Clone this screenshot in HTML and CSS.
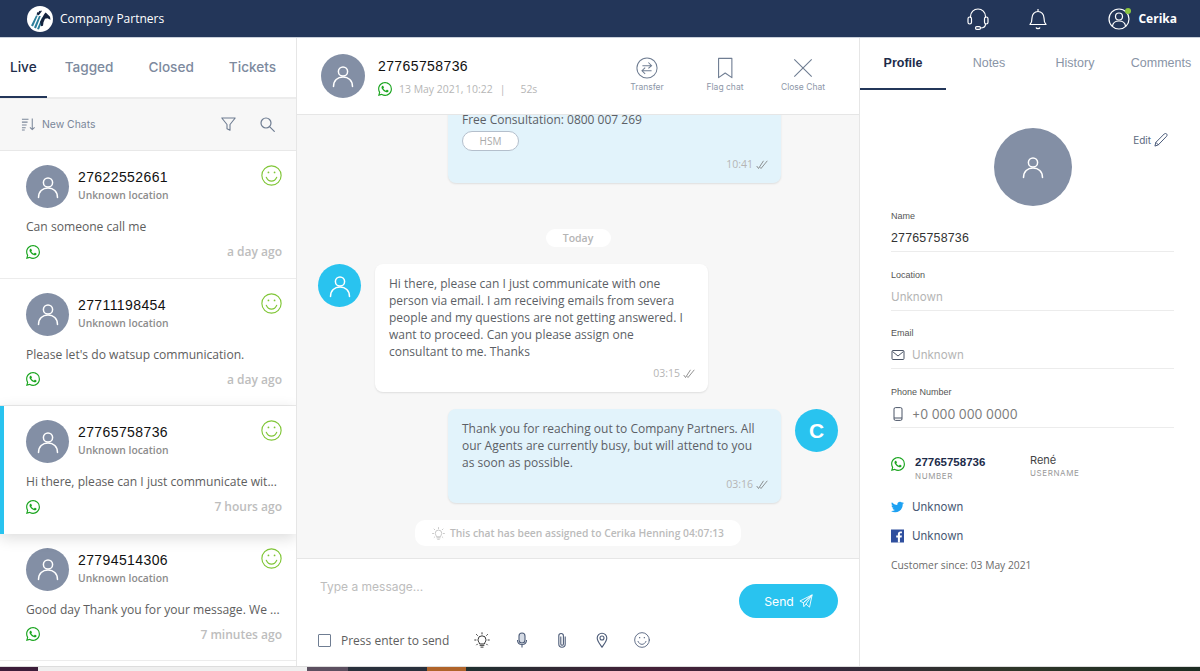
FILE: index.html
```html
<!DOCTYPE html>
<html lang="en">
<head>
	<meta charset="utf-8">
	<title>Company Partners</title>
	<link rel="stylesheet" href="styles.css">
</head>
<body>

<svg class="defs" width="0" height="0">
	<defs>
		<symbol id="i-user" viewBox="0 0 24 24">
			<circle cx="12" cy="7.5" r="4.6" fill="none" stroke="currentColor" stroke-width="1.5"/>
			<path d="M2.5 22.5c0-6 4-9.500 9.500-9.500s9.500 3.500 9.500 9.500" fill="none" stroke="currentColor" stroke-width="1.500" stroke-linecap="round"/>
		</symbol>
		<symbol id="i-wa" viewBox="0 0 24 24">
			<path fill="currentColor" d="M17.472 14.382c-.297-.149-1.758-.867-2.03-.967-.273-.099-.471-.148-.67.15-.197.297-.767.966-.94 1.164-.173.199-.347.223-.644.075-.297-.15-1.255-.463-2.39-1.475-.883-.788-1.48-1.761-1.653-2.059-.173-.297-.018-.458.13-.606.134-.133.298-.347.446-.52.149-.174.198-.298.298-.497.099-.198.05-.371-.025-.52-.075-.149-.669-1.612-.916-2.207-.242-.579-.487-.5-.669-.51-.173-.008-.371-.01-.57-.01-.198 0-.52.074-.792.372-.272.297-1.04 1.016-1.04 2.479 0 1.462 1.065 2.875 1.213 3.074.149.198 2.096 3.2 5.077 4.487.709.306 1.262.489 1.694.625.712.227 1.36.195 1.871.118.571-.085 1.758-.719 2.006-1.413.248-.694.248-1.289.173-1.413-.074-.124-.272-.198-.57-.347m-5.421 7.403h-.004a9.87 9.87 0 01-5.031-1.378l-.361-.214-3.741.982.998-3.648-.235-.374a9.86 9.86 0 01-1.51-5.26c.001-5.45 4.436-9.884 9.888-9.884 2.64 0 5.122 1.03 6.988 2.898a9.825 9.825 0 012.893 6.994c-.003 5.45-4.437 9.884-9.885 9.884m8.413-18.297A11.815 11.815 0 0012.05 0C5.495 0 .16 5.335.157 11.892c0 2.096.547 4.142 1.588 5.945L.057 24l6.305-1.654a11.882 11.882 0 005.683 1.448h.005c6.554 0 11.89-5.335 11.893-11.893a11.821 11.821 0 00-3.48-8.413z"/>
		</symbol>
		<symbol id="i-smile" viewBox="0 0 24 24">
			<g fill="none" stroke="currentColor" stroke-width="1.300" stroke-linecap="round">
				<circle cx="12" cy="12" r="11"/>
				<path d="M6 14c1.300 3 3.500 4.500 6 4.500s4.700-1.500 6-4.500"/>
			</g>
			<circle cx="8.500" cy="8.500" r="1" fill="currentColor"/>
			<circle cx="15.500" cy="8.500" r="1" fill="currentColor"/>
		</symbol>
		<symbol id="i-ticks" viewBox="0 0 12 10">
			<path d="M.7 6l1.800 2.500L7.500.8M4 7.300l1 1.200L11.300.8" fill="none" stroke="currentColor" stroke-width=".8"/>
		</symbol>
		<symbol id="i-bulb" viewBox="0 0 18 18">
			<g fill="none" stroke="currentColor" stroke-width="1.100" stroke-linecap="round">
				<path d="M6.300 13c-.3-1.400-1.800-2.200-1.800-4.200a4.500 4.500 0 019 0c0 2-1.500 2.800-1.800 4.200z"/>
				<path d="M6.800 15h4.400M7.800 17h2.400M9 .8v1.400M2.800 2.800l1 1M15.200 2.800l-1 1M.8 9h1.400M15.800 9h1.400M3 14.500l.9-.9M15 14.500l-.9-.9"/>
			</g>
		</symbol>
	</defs>
</svg>

<header class="topbar">
	<div class="brand">
		<svg class="brand-logo" viewBox="0 0 26 26">
			<circle cx="13" cy="13" r="13" fill="#fff"/>
			<path d="M4 19.500L9 9.500h1.800L6 20.500zM7 21.500L12 10h1.800L9 22.500zM10 23L15 11.500h1.800L12 23.500z" fill="#2c7f9b"/>
			<path d="M13 16l4-7.500 1.500-2 1 .8 3.500 3.500 .5 3-3-1.500-2.500.5-1.500 3.500-.5 3.500-2 .5z" fill="#14233f"/>
			<path d="M9.500 8.500l1-2.500 1 .5 .8-1.800 1 .6 .8-1 .7 1-3 4z" fill="#14233f"/>
		</svg>
		<span class="brand-name">Company Partners</span>
	</div>
	<div class="top-icons">
		<svg class="top-headset" viewBox="0 0 22 22" fill="none" stroke="#fff" stroke-width="1.200">
			<path d="M3.500 10V8.500a7.500 7.500 0 0115 0V10"/>
			<rect x="1" y="9" width="3.500" height="7" rx="1.700"/>
			<rect x="17.500" y="9" width="3.500" height="7" rx="1.700"/>
			<path d="M18.500 16c0 2.500-2 4-5 4"/>
			<rect x="8.500" y="18.700" width="5" height="2.600" rx="1.300"/>
		</svg>
		<svg class="top-bell" viewBox="0 0 18 22" fill="none" stroke="#fff" stroke-width="1.200" stroke-linejoin="round">
			<path d="M1 16.500c1.500-1.500 2-3 2-6.500 0-3.500 2.500-6.500 6-6.500s6 3 6 6.500c0 3.500.5 5 2 6.500z"/>
			<path d="M9 1v2.500"/>
			<path d="M7 19.500c.5 1.500 3.500 1.500 4 0"/>
		</svg>
		<div class="top-user">
			<svg class="top-user-icon" viewBox="0 0 22 22" fill="none" stroke="#fff" stroke-width="1.200">
				<circle cx="11" cy="11" r="10"/>
				<circle cx="11" cy="8.500" r="3.500"/>
				<path d="M4.500 18c.5-3.500 3-5 6.500-5s6 1.500 6.500 5"/>
			</svg>
			<span class="online-dot"></span>
		</div>
		<span class="top-name">Cerika</span>
	</div>
</header>

<main class="app">
	<aside class="chats">
		<nav class="chat-tabs">
			<a class="chat-tab chat-tab-on">Live</a>
			<a class="chat-tab">Tagged</a>
			<a class="chat-tab">Closed</a>
			<a class="chat-tab">Tickets</a>
		</nav>
		<div class="chat-tools">
			<svg class="tool-sort" viewBox="0 0 16 14" fill="none" stroke="#7a8699" stroke-width="1.100">
				<path d="M1 2h7M1 5h6M1 8h5M1 11h4M1 13.500h3"/>
				<path d="M12 1v12M9.500 10.500L12 13l2.500-2.500"/>
			</svg>
			<span class="tool-label">New Chats</span>
			<svg class="tool-filter" viewBox="0 0 15 15" fill="none" stroke="#6f7d92" stroke-width="1.100" stroke-linejoin="round">
				<path d="M.8 1h13.400L9 7.500v5.800l-3-1.500V7.500z"/>
			</svg>
			<svg class="tool-search" viewBox="0 0 15 15" fill="none" stroke="#6f7d92" stroke-width="1.200" stroke-linecap="round">
				<circle cx="6" cy="6" r="5"/>
				<path d="M9.800 9.800L14.300 14.300"/>
			</svg>
		</div>

		<div class="chat-item">
			<div class="chat-top">
				<div class="avatar avatar-grey"><svg class="avatar-user"><use href="#i-user"/></svg></div>
				<div class="chat-who">
					<div class="phone">27622552661</div>
					<div class="place">Unknown location</div>
				</div>
				<svg class="mood"><use href="#i-smile"/></svg>
			</div>
			<p class="chat-msg">Can someone call me</p>
			<div class="chat-foot">
				<svg class="wa"><use href="#i-wa"/></svg>
				<span class="chat-time">a day ago</span>
			</div>
		</div>

		<div class="chat-item">
			<div class="chat-top">
				<div class="avatar avatar-grey"><svg class="avatar-user"><use href="#i-user"/></svg></div>
				<div class="chat-who">
					<div class="phone">27711198454</div>
					<div class="place">Unknown location</div>
				</div>
				<svg class="mood"><use href="#i-smile"/></svg>
			</div>
			<p class="chat-msg">Please let's do watsup communication.</p>
			<div class="chat-foot">
				<svg class="wa"><use href="#i-wa"/></svg>
				<span class="chat-time">a day ago</span>
			</div>
		</div>

		<div class="chat-item chat-item-on">
			<div class="chat-top">
				<div class="avatar avatar-grey"><svg class="avatar-user"><use href="#i-user"/></svg></div>
				<div class="chat-who">
					<div class="phone">27765758736</div>
					<div class="place">Unknown location</div>
				</div>
				<svg class="mood"><use href="#i-smile"/></svg>
			</div>
			<p class="chat-msg">Hi there, please can I just communicate wit...</p>
			<div class="chat-foot">
				<svg class="wa"><use href="#i-wa"/></svg>
				<span class="chat-time">7 hours ago</span>
			</div>
		</div>

		<div class="chat-item">
			<div class="chat-top">
				<div class="avatar avatar-grey"><svg class="avatar-user"><use href="#i-user"/></svg></div>
				<div class="chat-who">
					<div class="phone">27794514306</div>
					<div class="place">Unknown location</div>
				</div>
				<svg class="mood"><use href="#i-smile"/></svg>
			</div>
			<p class="chat-msg">Good day Thank you for your message. We ...</p>
			<div class="chat-foot">
				<svg class="wa"><use href="#i-wa"/></svg>
				<span class="chat-time">7 minutes ago</span>
			</div>
		</div>
	</aside>

	<section class="convo">
		<div class="convo-head">
			<div class="avatar avatar-grey avatar-head"><svg class="avatar-user"><use href="#i-user"/></svg></div>
			<div class="convo-who">
				<div class="phone">27765758736</div>
				<div class="convo-meta">
					<svg class="wa"><use href="#i-wa"/></svg>
					<span>13 May 2021, 10:22</span>
					<span class="meta-bar">|</span>
					<span>52s</span>
				</div>
			</div>
			<div class="actions">
				<div class="action">
					<svg class="action-icon" viewBox="0 0 24 24" fill="none" stroke="#6f7d92" stroke-width="1.100">
						<circle cx="12" cy="12" r="11"/>
						<path d="M7 9.500h10M13.500 6l3.500 3.500-3.500 3M17 15H7M10 11.500L6.500 15l3.500 3.500"/>
					</svg>
					<span>Transfer</span>
				</div>
				<div class="action">
					<svg class="action-icon" viewBox="0 0 24 24" fill="none" stroke="#6f7d92" stroke-width="1.200" stroke-linejoin="round">
						<path d="M5 1.500h14.500v21L12.200 17.500 5 22.500z"/>
					</svg>
					<span>Flag chat</span>
				</div>
				<div class="action">
					<svg class="action-icon" viewBox="0 0 24 24" fill="none" stroke="#6f7d92" stroke-width="1.200">
						<path d="M2.500 2.500l19 19M21.500 2.500l-19 19"/>
					</svg>
					<span>Close Chat</span>
				</div>
			</div>
		</div>

		<div class="messages">
			<div class="msg-row msg-row-out">
				<div class="bubble bubble-out">
					<p>Free Consultation: 0800 007 269</p>
					<span class="hsm">HSM</span>
					<div class="stamp">10:41 <svg class="ticks"><use href="#i-ticks"/></svg></div>
				</div>
				<div class="avatar-gap"></div>
			</div>

			<div class="day"><span>Today</span></div>

			<div class="msg-row">
				<div class="avatar avatar-blue"><svg class="avatar-user"><use href="#i-user"/></svg></div>
				<div class="bubble">
					<p>Hi there, please can I just communicate with one<br>person via email. I am receiving emails from severa<br>people and my questions are not getting answered. I<br>want to proceed. Can you please assign one<br>consultant to me. Thanks</p>
					<div class="stamp">03:15 <svg class="ticks"><use href="#i-ticks"/></svg></div>
				</div>
			</div>

			<div class="msg-row msg-row-out">
				<div class="bubble bubble-out">
					<p>Thank you for reaching out to Company Partners. All<br>our Agents are currently busy, but will attend to you<br>as soon as possible.</p>
					<div class="stamp">03:16 <svg class="ticks"><use href="#i-ticks"/></svg></div>
				</div>
				<div class="avatar avatar-blue avatar-letter">C</div>
			</div>

			<div class="notice">
				<span><svg class="notice-bulb"><use href="#i-bulb"/></svg>This chat has been assigned to Cerika Henning 04:07:13</span>
			</div>
		</div>

		<div class="composer">
			<div class="composer-top">
				<span class="placeholder">Type a message...</span>
				<button class="send">Send
					<svg class="send-icon" viewBox="0 0 16 16" fill="none" stroke="#fff" stroke-width="1" stroke-linejoin="round">
						<path d="M15 1L1 8l4 2zM15 1L5 10l.5 4.500 2.500-3zM15 1l-3 14-4-3.500"/>
					</svg>
				</button>
			</div>
			<div class="composer-foot">
				<span class="check"></span>
				<span class="check-label">Press enter to send</span>
				<div class="composer-icons">
					<svg class="c-icon c-icon-dark"><use href="#i-bulb"/></svg>
					<svg class="c-icon" viewBox="0 0 16 16" fill="none" stroke="currentColor" stroke-width="1.100">
						<rect x="5" y="1" width="6" height="10" rx="3" fill="#d5dbe5"/>
						<path d="M3.500 8c0 3 2 4.500 4.500 4.500S12.500 11 12.500 8M8 12.500V15.500"/>
					</svg>
					<svg class="c-icon" viewBox="0 0 16 16" fill="none" stroke="currentColor" stroke-width="1.100">
						<path d="M6.800 4.500v7.500a1.300 1.300 0 002.600 0V3.800a2.300 2.300 0 00-4.600 0V12a3.200 3.200 0 006.400 0V4.500"/>
					</svg>
					<svg class="c-icon" viewBox="0 0 16 16" fill="none" stroke="currentColor" stroke-width="1.100">
						<path d="M8 15.200C5.500 11.500 3.200 9 3.200 6a4.800 4.800 0 019.600 0c0 3-2.300 5.500-4.800 9.200z"/>
						<circle cx="8" cy="6" r="2"/>
					</svg>
					<svg class="c-icon"><use href="#i-smile"/></svg>
				</div>
			</div>
		</div>
	</section>

	<aside class="profile">
		<nav class="profile-tabs">
			<a class="profile-tab profile-tab-on">Profile</a>
			<a class="profile-tab">Notes</a>
			<a class="profile-tab">History</a>
			<a class="profile-tab">Comments</a>
		</nav>
		<div class="profile-body">
			<div class="edit">Edit
				<svg class="edit-icon" viewBox="0 0 15 15" fill="none" stroke="#3d4f70" stroke-width="1">
					<path d="M1 14l1-4L11 1c1-.8 2-.6 2.500 0s.8 1.500 0 2.500L4.500 12.800z"/>
					<path d="M2 10l3 3"/>
				</svg>
			</div>
			<div class="profile-pic">
				<div class="avatar avatar-grey avatar-big"><svg class="avatar-user"><use href="#i-user"/></svg></div>
			</div>

			<div class="field">
				<label>Name</label>
				<div class="field-value field-dark">27765758736</div>
			</div>
			<div class="field">
				<label>Location</label>
				<div class="field-value">Unknown</div>
			</div>
			<div class="field">
				<label>Email</label>
				<div class="field-value">
					<svg class="field-icon" viewBox="0 0 14 14" fill="none" stroke="#4b5567" stroke-width="1"><rect x="1" y="2.500" width="12" height="9" rx="1"/><path d="M1.500 3.500L7 8l5.500-4.500"/></svg>
					Unknown
				</div>
			</div>
			<div class="field">
				<label>Phone Number</label>
				<div class="field-value field-phone">
					<svg class="field-icon" viewBox="0 0 14 14" fill="none" stroke="#4b5567" stroke-width="1"><rect x="3" y=".6" width="8" height="12.800" rx="1.500"/><path d="M3 11h8"/></svg>
					+0 000 000 0000
				</div>
			</div>

			<div class="contact">
				<svg class="wa"><use href="#i-wa"/></svg>
				<div class="contact-num">
					<strong>27765758736</strong>
					<small>NUMBER</small>
				</div>
				<div class="contact-user">
					<span>René</span>
					<small>USERNAME</small>
				</div>
			</div>

			<div class="social">
				<svg class="social-icon" viewBox="0 0 24 24"><path fill="#1da1f2" d="M23.953 4.57a10 10 0 01-2.825.775 4.958 4.958 0 002.163-2.723c-.951.555-2.005.959-3.127 1.184a4.92 4.92 0 00-8.384 4.482C7.69 8.095 4.067 6.13 1.64 3.162a4.822 4.822 0 00-.666 2.475c0 1.71.87 3.213 2.188 4.096a4.904 4.904 0 01-2.228-.616v.06a4.923 4.923 0 003.946 4.827 4.996 4.996 0 01-2.212.085 4.936 4.936 0 004.604 3.417 9.867 9.867 0 01-6.102 2.105c-.39 0-.779-.023-1.17-.067a13.995 13.995 0 007.557 2.209c9.053 0 13.998-7.496 13.998-13.985 0-.21 0-.42-.015-.63A9.935 9.935 0 0024 4.590z"/></svg>
				<span>Unknown</span>
			</div>
			<div class="social">
				<svg class="social-icon" viewBox="0 0 24 24"><rect width="24" height="24" fill="#2f4f9e"/><path fill="#fff" d="M16.500 24v-9.300h3.100l.5-3.600h-3.600V8.800c0-1 .3-1.800 1.800-1.800h1.900V3.800c-.3 0-1.500-.1-2.800-.1-2.800 0-4.700 1.700-4.700 4.800v2.600H9.600v3.600h3.100V24z"/></svg>
				<span>Unknown</span>
			</div>
			<p class="since">Customer since: 03 May 2021</p>
		</div>
	</aside>
</main>

<div class="desktop-strip">
	<span class="strip-a"></span>
	<span class="strip-b"></span>
	<span class="strip-c"></span>
	<span class="strip-d"></span>
	<span class="strip-e"></span>
	<span class="strip-f"></span>
</div>

</body>
</html>
```

FILE: styles.css
```css
* {
	box-sizing: border-box;
}

html, body {
	margin: 0;
	padding: 0;
	height: 671px;
	overflow: hidden;
}

body {
	display: flex;
	flex-direction: column;
	background: #fff;
	font-family: "Open Sans", "Liberation Sans", sans-serif;
	color: #555;
}

p {
	margin: 0;
}

.defs {
	position: absolute;
}

/* top bar */
.topbar {
	height: 38px;
	flex: none;
	display: flex;
	align-items: center;
	justify-content: space-between;
	background: #233659;
	border-bottom: 1px solid #c9d0db;
	padding: 0 23px 0 27px;
}

.brand {
	display: flex;
	align-items: center;
	gap: 7px;
}

.brand-logo {
	width: 26px;
	height: 26px;
}

.brand-name {
	color: #fff;
	font-size: 12px;
	font-weight: 500;
}

.top-icons {
	display: flex;
	align-items: center;
}

.top-headset {
	width: 22px;
	height: 22px;
}

.top-bell {
	width: 18px;
	height: 22px;
	margin-left: 40px;
}

.top-user {
	position: relative;
	width: 22px;
	height: 22px;
	margin-left: 61px;
}

.top-user-icon {
	width: 22px;
	height: 22px;
	display: block;
}

.online-dot {
	position: absolute;
	top: 0;
	right: -1px;
	width: 6px;
	height: 6px;
	border-radius: 50%;
	background: #8cc63f;
}

.top-name {
	color: #fff;
	font-size: 12px;
	font-weight: 700;
	margin-left: 8px;
}

/* columns */
.app {
	flex: 1;
	min-height: 0;
	display: flex;
}

.chats {
	width: 297px;
	flex: none;
	border-right: 1px solid #e6e6e6;
	overflow: hidden;
}

.convo {
	width: 563px;
	flex: none;
	display: flex;
	flex-direction: column;
	border-right: 1px solid #e6e6e6;
}

.profile {
	flex: 1;
	min-width: 0;
}

/* left list */
.chat-tabs {
	height: 61px;
	display: flex;
	gap: 15px;
	border-bottom: 2px solid #ececec;
	font-family: Inter, "Liberation Sans", sans-serif;
}

.chat-tab {
	height: 60px;
	padding: 0 10px;
	line-height: 58px;
	font-size: 13.600px;
	font-weight: 500;
	color: #7d8a9e;
}

.chat-tab-on {
	color: #1d2c4a;
	margin-right: -7px;
	border-bottom: 2px solid #233659;
}

.chat-tools {
	height: 52px;
	display: flex;
	align-items: center;
	padding: 0 21px 1px;
	background: #f7f7f7;
	border-bottom: 1px solid #e8e8e8;
}

.tool-sort {
	width: 15px;
	height: 14px;
}

.tool-label {
	margin-left: 6px;
	font-family: Inter, "Liberation Sans", sans-serif;
	font-size: 10.400px;
	color: #7a8699;
}

.tool-filter {
	width: 15px;
	height: 15px;
	margin-left: auto;
}

.tool-search {
	width: 15px;
	height: 15px;
	margin-left: 24px;
}

.chat-item {
	height: 127.6px;
	padding: 14px 14px 0 26px;
	border-bottom: 1px solid #ececec;
	background: #fff;
}

.chat-item-on {
	position: relative;
	box-shadow: 0 4px 14px rgba(0, 0, 0, .14);
	border-left: 4px solid #29c3ef;
	border-bottom: 0;
	padding-left: 22px;
}

.chat-top {
	display: flex;
}

.avatar {
	width: 43px;
	height: 43px;
	border-radius: 50%;
	flex: none;
	display: flex;
	align-items: center;
	justify-content: center;
	color: #fff;
}

.avatar-grey {
	background: #838fa5;
}

.avatar-blue {
	background: #29c3ef;
}

.avatar-user {
	width: 24px;
	height: 24px;
}

.avatar-head {
	width: 44px;
	height: 44px;
}

.avatar-big {
	width: 78px;
	height: 78px;
}

.avatar-letter {
	font-family: "Liberation Sans", sans-serif;
	font-size: 21px;
	font-weight: 700;
}

.chat-who {
	margin-left: 9px;
	flex: 1;
}

.phone {
	font-family: "Liberation Sans", sans-serif;
	font-size: 14px;
	line-height: 17px;
	letter-spacing: .4px;
	color: #111;
	margin-top: 4px;
}

.place {
	font-size: 10.300px;
	font-weight: 600;
	line-height: 14px;
	color: #8c8c8c;
	margin-top: 2px;
}

.mood {
	width: 21px;
	height: 21px;
	color: #80c637;
	flex: none;
}

.chat-msg {
	margin-top: 10px;
	font-size: 12.100px;
	line-height: 17px;
	color: #5e5e5e;
	white-space: nowrap;
}

.chat-foot {
	display: flex;
	align-items: center;
	justify-content: space-between;
	margin-top: 8px;
}

.wa {
	width: 14px;
	height: 14px;
	color: #1aa51f;
	flex: none;
}

.chat-time {
	font-size: 12px;
	font-weight: 600;
	color: #bdbdbd;
}

/* middle column */
.convo-head {
	height: 77px;
	flex: none;
	display: flex;
	align-items: center;
	padding: 0 17px 0 24px;
	background: #fff;
	border-bottom: 1px solid #e6e6e6;
}

.convo-who {
	margin: 2px 0 0 13px;
}

.convo-who .phone {
	margin-top: 0;
}

.convo-meta {
	display: flex;
	align-items: center;
	margin-top: 7px;
	gap: 7px;
	font-size: 10.450px;
	color: #b6b6b6;
}

.meta-bar {
	margin: 0 8px 0 0;
}

.actions {
	display: flex;
	margin-left: auto;
}

.action {
	width: 78px;
	display: flex;
	flex-direction: column;
	align-items: center;
	margin-bottom: 3px;
	font-family: Inter, "Liberation Sans", sans-serif;
	font-size: 8.500px;
	color: #8d97a8;
}

.action-icon {
	width: 22px;
	height: 22px;
	margin-bottom: 3px;
}

.messages {
	flex: 1;
	min-height: 0;
	display: flex;
	flex-direction: column;
	justify-content: flex-end;
	overflow: hidden;
	background: #f7f7f7;
	padding: 0 21px 12px;
}

.msg-row {
	display: flex;
	gap: 14px;
	flex: none;
	align-items: flex-start;
}

.msg-row-out {
	justify-content: flex-end;
	margin-top: 17px;
}

.msg-row:first-child {
	margin-top: 0;
}

.avatar-gap {
	width: 43px;
}

.bubble {
	width: 333px;
	padding: 11px 13px 10px 14px;
	background: #fff;
	border-radius: 8px;
	box-shadow: 0 1px 2px rgba(0, 0, 0, .1);
	font-size: 12px;
	line-height: 17px;
	color: #5c5f66;
}

.bubble-out {
	background: #e2f3fb;
}

.hsm {
	display: block;
	width: 57px;
	height: 20px;
	margin-top: 3px;
	border: 1px solid #b4bfcc;
	border-radius: 10px;
	background: #fff;
	text-align: center;
	font-size: 10px;
	line-height: 18px;
	color: #aaa;
}

.stamp {
	display: flex;
	align-items: center;
	justify-content: flex-end;
	gap: 3px;
	margin-top: 5px;
	font-size: 10.500px;
	color: #b5b5b5;
}

.ticks {
	width: 12px;
	height: 10px;
	color: #777;
}

.day {
	display: flex;
	justify-content: center;
	flex: none;
	margin: 46px 0 17px;
}

.day span {
	width: 65px;
	height: 18px;
	border-radius: 9px;
	background: #fff;
	text-align: center;
	font-size: 10.500px;
	font-weight: 600;
	line-height: 18px;
	color: #b5b5b5;
}

.notice {
	display: flex;
	justify-content: center;
	flex: none;
	margin-top: 17px;
}

.notice span {
	display: flex;
	align-items: center;
	gap: 5px;
	height: 26px;
	padding: 0 17px;
	border-radius: 10px;
	background: #fff;
	font-size: 10.300px;
	font-weight: 600;
	color: #bbb;
}

.notice-bulb {
	width: 13px;
	height: 13px;
	color: #bbb;
}

.composer {
	height: 108px;
	flex: none;
	padding: 0 21px;
	border-top: 1px solid #e6e6e6;
	background: #fff;
}

.composer-top {
	display: flex;
	justify-content: space-between;
	height: 74px;
}

.placeholder {
	margin: 20px 0 0 2px;
	font-family: Inter, "Liberation Sans", sans-serif;
	font-size: 12px;
	line-height: 16px;
	color: #bdbdbd;
}

.send {
	width: 99px;
	height: 34px;
	margin-top: 25px;
	display: flex;
	align-items: center;
	justify-content: center;
	gap: 5px;
	border: 0;
	border-radius: 17px;
	background: #29c3ef;
	color: #fff;
	font-family: Inter, "Liberation Sans", sans-serif;
	font-size: 12.200px;
}

.send-icon {
	width: 14px;
	height: 14px;
}

.composer-foot {
	display: flex;
	align-items: center;
	height: 14px;
}

.check {
	width: 13px;
	height: 13px;
	border: 1px solid #6f7d92;
	border-radius: 1px;
}

.check-label {
	margin-left: 10px;
	font-size: 12px;
	color: #5e5e5e;
}

.composer-icons {
	display: flex;
	align-items: center;
	gap: 24px;
	margin-left: 25px;
}

.c-icon {
	width: 16px;
	height: 16px;
	color: #4d5c78;
}

.c-icon-dark {
	color: #333;
}

/* right column */
.profile-tabs {
	display: flex;
	height: 52px;
	font-family: "Liberation Sans", sans-serif;
	font-size: 12.500px;
}

.profile-tab {
	width: 86px;
	flex: none;
	padding-top: 18px;
	text-align: center;
	color: #8994a6;
}

.profile-tab-on {
	font-weight: 700;
	color: #1d2c4a;
	border-bottom: 2px solid #233659;
}

.profile-body {
	position: relative;
	padding: 38px 26px 0 31px;
}

.edit {
	position: absolute;
	top: 43px;
	right: 32px;
	display: flex;
	align-items: center;
	gap: 3px;
	font-family: Inter, "Liberation Sans", sans-serif;
	font-size: 10px;
	color: #5c6a80;
}

.edit-icon {
	width: 14px;
	height: 14px;
}

.profile-pic {
	display: flex;
	justify-content: center;
}

.field {
	height: 58.7px;
	padding-top: 4px;
}

.field label {
	display: block;
	font-family: "Liberation Sans", sans-serif;
	font-size: 9px;
	line-height: 12px;
	color: #555;
}

.field-value {
	display: flex;
	align-items: center;
	gap: 7px;
	height: 29px;
	margin-top: 1px;
	border-bottom: 1px solid #ececec;
	padding-top: 2px;
	font-family: Inter, "Liberation Sans", sans-serif;
	font-size: 11.600px;
	color: #b5b5b5;
}

.field-dark {
	font-family: "Liberation Sans", sans-serif;
	font-size: 12.400px;
	letter-spacing: .2px;
	color: #333;
}

.field-phone {
	font-size: 12.500px;
	color: #7d7d7d;
}

.field-icon {
	width: 14px;
	height: 14px;
	flex: none;
}

.contact {
	display: flex;
	height: 51px;
	align-items: flex-start;
	padding-top: 3px;
}

.contact .wa {
	margin-top: 13px;
}

.contact strong {
	display: block;
	font-family: "Liberation Sans", sans-serif;
	font-size: 11.500px;
	line-height: 14px;
	margin-top: 11px;
	color: #1d2c4a;
}

.contact small {
	display: block;
	margin-top: 1px;
	font-family: Inter, "Liberation Sans", sans-serif;
	font-size: 8px;
	line-height: 12px;
	letter-spacing: .6px;
	color: #9a9a9a;
}

.contact-num {
	width: 115px;
	margin-left: 10px;
}

.contact-user span {
	display: block;
	font-family: Inter, "Liberation Sans", sans-serif;
	font-size: 11px;
	line-height: 14px;
	margin-top: 9px;
	color: #444;
}

.contact-user small {
	margin-top: 0;
}

.social {
	display: flex;
	align-items: center;
	gap: 8px;
	height: 29.500px;
	font-family: Inter, "Liberation Sans", sans-serif;
	font-size: 11.500px;
	color: #4a5a75;
}

.social-icon {
	width: 13px;
	height: 14px;
	flex: none;
}

.since {
	margin-top: 7px;
	font-size: 10.300px;
	line-height: 14px;
	color: #6b6b6b;
}

/* strip of the desktop below the window */
.desktop-strip {
	height: 5px;
	flex: none;
	display: flex;
	border-top: 1px solid #ddd;
}

.strip-a {
	width: 38px;
	background: #3c1d3a;
}

.strip-b {
	width: 269px;
	background: #efefef;
}

.strip-c {
	width: 41px;
	background: #5c4f60;
}

.strip-d {
	width: 79px;
	background: #29303c;
}

.strip-e {
	width: 39px;
	background: #b0642a;
}

.strip-f {
	flex: 1;
	background: linear-gradient(90deg, #1f3030, #452038 25%, #33283a 50%, #2e3628 75%, #1d2c22);
}
```
